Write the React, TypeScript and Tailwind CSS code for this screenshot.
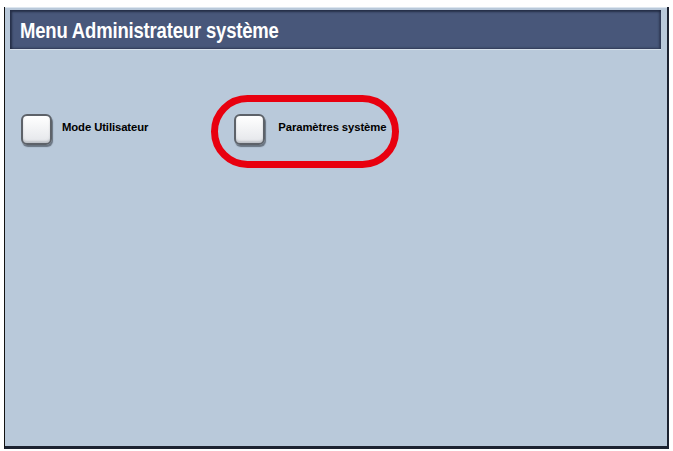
import React from "react";

interface OptionButtonProps {
  label: string;
  className?: string;
  gap?: string;
}

function OptionButton({ label, className = "", gap = "gap-[10px]" }: OptionButtonProps) {
  return (
    <div className={`flex items-start ${gap} ${className}`}>
      <div className="h-[31px] w-[31px] shrink-0 rounded-[6px] border-2 border-[#5d6269] bg-gradient-to-b from-[#ffffff] to-[#e4e6ea] shadow-[1px_2px_1px_rgba(40,45,55,0.55),inset_0_-2px_2px_rgba(120,125,135,0.35)]" />
      <span className="mt-[5px] whitespace-nowrap font-['Liberation_Sans',Arial,sans-serif] text-[11.3px] font-bold tracking-[-0.1px] text-black">
        {label}
      </span>
    </div>
  );
}

export default function App() {
  return (
    <div className="relative h-[451px] w-[673px] overflow-hidden bg-white">
      <div className="ml-[4px] mt-[7px] flex h-[442px] w-[665px] flex-col border-b-[3px] border-l border-r-2 border-b-[#1c2230] border-l-[#111] border-r-[#1c2230] bg-[#b9c9da] pl-[5px] pr-[6px] pt-[3px] shadow-[inset_0_1px_0_#dde6ef]">
        <div className="flex h-[39px] items-center bg-[#48577a] pl-[10px] pt-[2px] shadow-[inset_2px_2px_2px_rgba(30,38,60,0.8),inset_-2px_-1px_2px_rgba(30,38,60,0.6),0_1px_0_#d6e0ea]">
          <h1 className="origin-left scale-x-[0.84] whitespace-nowrap font-['Liberation_Sans',Arial,sans-serif] text-[22px] font-bold tracking-[-0.2px] text-white">
            Menu Administrateur système
          </h1>
        </div>

        <div className="mt-[65px] flex items-start">
          <OptionButton label="Mode Utilisateur" className="ml-[11px]" />
          <OptionButton label="Paramètres système" className="ml-[86px]" gap="gap-[13px]" />
        </div>
      </div>

      {/* red highlight drawn over the second option */}
      <div className="pointer-events-none absolute left-[211px] top-[95px] h-[73px] w-[188px] rounded-full border-[7px] border-[#e8000f]" />
    </div>
  );
}
